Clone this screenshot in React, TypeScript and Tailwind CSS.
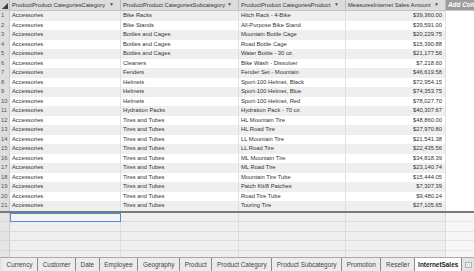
import React from "react";

const rows: [string, string, string, string][] = [
  ["Accessories", "Bike Racks", "Hitch Rack - 4-Bike", "$39,360.00"],
  ["Accessories", "Bike Stands", "All-Purpose Bike Stand", "$39,591.00"],
  ["Accessories", "Bottles and Cages", "Mountain Bottle Cage", "$20,229.75"],
  ["Accessories", "Bottles and Cages", "Road Bottle Cage", "$15,390.88"],
  ["Accessories", "Bottles and Cages", "Water Bottle - 30 oz.", "$21,177.56"],
  ["Accessories", "Cleaners", "Bike Wash - Dissolver", "$7,218.60"],
  ["Accessories", "Fenders", "Fender Set - Mountain", "$46,619.58"],
  ["Accessories", "Helmets", "Sport-100 Helmet, Black", "$72,954.15"],
  ["Accessories", "Helmets", "Sport-100 Helmet, Blue", "$74,353.75"],
  ["Accessories", "Helmets", "Sport-100 Helmet, Red", "$78,027.70"],
  ["Accessories", "Hydration Packs", "Hydration Pack - 70 oz.", "$40,307.67"],
  ["Accessories", "Tires and Tubes", "HL Mountain Tire", "$48,860.00"],
  ["Accessories", "Tires and Tubes", "HL Road Tire", "$27,970.80"],
  ["Accessories", "Tires and Tubes", "LL Mountain Tire", "$21,541.38"],
  ["Accessories", "Tires and Tubes", "LL Road Tire", "$22,435.56"],
  ["Accessories", "Tires and Tubes", "ML Mountain Tire", "$34,818.39"],
  ["Accessories", "Tires and Tubes", "ML Road Tire", "$23,140.74"],
  ["Accessories", "Tires and Tubes", "Mountain Tire Tube", "$15,444.05"],
  ["Accessories", "Tires and Tubes", "Patch Kit/8 Patches", "$7,307.39"],
  ["Accessories", "Tires and Tubes", "Road Tire Tube", "$9,480.24"],
  ["Accessories", "Tires and Tubes", "Touring Tire", "$27,105.65"],
];

const headers = [
  "ProductProduct CategoriesCategory",
  "ProductProduct CategoriesSubcategory",
  "ProductProduct CategoriesProduct",
  "MeasuresInternet Sales Amount",
];

const tabs = [
  "Currency",
  "Customer",
  "Date",
  "Employee",
  "Geography",
  "Product",
  "Product Category",
  "Product Subcategory",
  "Promotion",
  "Reseller",
];

const cols = "grid grid-cols-[10px_111px_118px_107px_100px_1fr]";

const App = () => {
  return (
    <div
      className="w-[474px] h-[271px] overflow-hidden bg-white flex flex-col text-[#333]"
      style={{ fontFamily: '"Liberation Sans", Arial, sans-serif' }}
    >
      {/* header */}
      <div className={`${cols} h-[11px] bg-[#dcdcdc] border-b border-[#c4c4c4] text-[5.8px]`}>
        <div className="relative bg-[#d4d4d4] border-r border-[#bdbdbd]">
          <div className="absolute right-[1px] bottom-[1px] w-0 h-0 border-l-[6px] border-l-transparent border-b-[6px] border-b-[#3c3c3c]"></div>
        </div>
        {headers.map((h) => (
          <div
            key={h}
            className="flex items-center justify-between pl-[2px] pr-[6px] border-r border-[#bdbdbd] whitespace-nowrap overflow-hidden"
          >
            <span>{h}</span>
            <span className="text-[5px] text-[#555]">▼</span>
          </div>
        ))}
        <div className="flex items-center pl-[2px] bg-[#9c9c9c] text-white italic font-bold text-[6.4px] whitespace-nowrap overflow-hidden">
          Add Column
        </div>
      </div>

      {/* data rows */}
      {rows.map((r, i) => (
        <div
          key={i}
          className={`${cols} h-[9.5px] text-[5.8px] leading-[9.5px] ${i % 2 === 0 ? "bg-[#efefef]" : "bg-white"}`}
        >
          <div className="bg-[#dedede] text-[#555] pl-[1px] border-r border-[#c8c8c8] border-b border-b-[#d0d0d0]">
            {i + 1}
          </div>
          <div className="pl-[2px] border-r border-b border-[#e0e0e0] whitespace-nowrap overflow-hidden">{r[0]}</div>
          <div className="pl-[2px] border-r border-b border-[#e0e0e0] whitespace-nowrap overflow-hidden">{r[1]}</div>
          <div className="pl-[2px] border-r border-b border-[#e0e0e0] whitespace-nowrap overflow-hidden">{r[2]}</div>
          <div className="pr-[3px] text-right border-r border-b border-[#e0e0e0] whitespace-nowrap overflow-hidden">{r[3]}</div>
          <div className="bg-white border-b border-[#ececec]"></div>
        </div>
      ))}

      <div className="h-[2px] bg-[#7a7a7a]"></div>

      {/* empty calc area */}
      <div className="flex-1 flex flex-col overflow-hidden">
        {Array.from({ length: 5 }).map((_, i) => (
          <div key={i} className={`${cols} h-[9.5px] shrink-0`}>
            <div className="bg-[#e4e4e4] border-r border-[#cfcfcf] border-b border-b-[#d8d8d8]"></div>
            <div
              className={`bg-[#efefef] border-r border-b border-[#dcdcdc] ${i === 0 ? "outline outline-[1.5px] outline-[#4a8fd8] -outline-offset-1 bg-[#f4f4f4]" : ""}`}
            ></div>
            <div className="bg-[#efefef] border-r border-b border-[#dcdcdc]"></div>
            <div className="bg-[#efefef] border-r border-b border-[#dcdcdc]"></div>
            <div className="bg-[#efefef] border-r border-b border-[#dcdcdc]"></div>
            <div className="bg-[#f7f7f7] border-b border-[#e6e6e6]"></div>
          </div>
        ))}
      </div>

      {/* sheet tabs */}
      <div className="h-[14px] shrink-0 flex items-stretch bg-[#e3e3e3] border-t border-[#a8a8a8] pl-[2px] text-[6.4px] text-[#444]">
        {tabs.map((t) => (
          <div
            key={t}
            className="flex items-center px-[4.6px] border-r border-[#8a8a8a] whitespace-nowrap bg-[#ececec]"
          >
            {t}
          </div>
        ))}
        <div className="flex items-center px-[3px] bg-white font-bold text-[#222] border-r border-[#8a8a8a] whitespace-nowrap">
          InternetSales
        </div>
        <div className="flex items-center pl-[3px]">
          <div className="w-[7px] h-[6px] border border-[#b0b0b0] bg-[#f2f2f2] grid grid-cols-2 gap-[1px] p-[1px]">
            <div className="bg-[#cfcfcf]"></div>
            <div className="bg-[#cfcfcf]"></div>
          </div>
        </div>
      </div>
    </div>
  );
};

export default App;
